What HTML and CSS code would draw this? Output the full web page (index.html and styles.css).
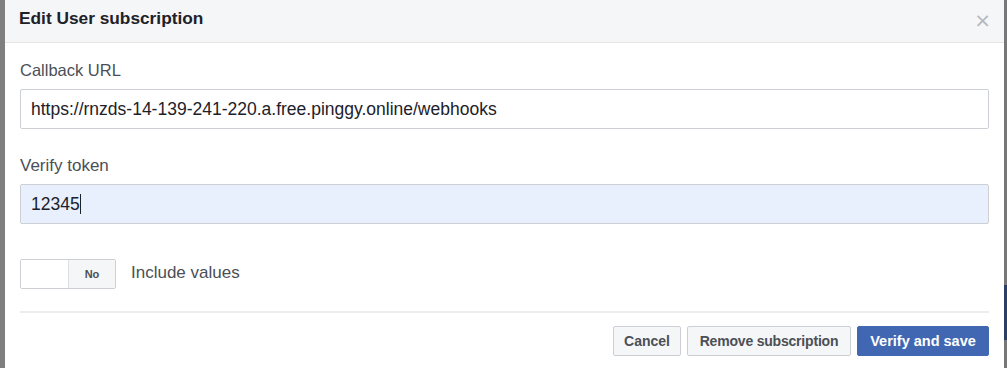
FILE: index.html
```html
<!DOCTYPE html>
<html lang="en">
<head>
<meta charset="utf-8"/>
<meta content="width=device-width, initial-scale=1.0" name="viewport"/>
<title>Edit User subscription</title>
<link rel="stylesheet" href="styles.css">
</head>
<body>
<div class="overlay">
<div class="dialog">
<header class="dialog-head">
<h1>Edit User subscription</h1>
<span class="close">&times;</span>
</header>
<main class="dialog-body">
<label class="field-label">Callback URL</label>
<div class="text-input">https://rnzds-14-139-241-220.a.free.pinggy.online/webhooks</div>
<label class="field-label second">Verify token</label>
<div class="text-input filled">12345<span class="caret"></span></div>
<div class="toggle-row">
<div class="toggle">
<span class="toggle-off"></span>
<span class="toggle-label">No</span>
</div>
<span class="toggle-text">Include values</span>
</div>
</main>
<footer class="dialog-foot">
<button class="btn btn-cancel">Cancel</button>
<button class="btn btn-remove">Remove subscription</button>
<button class="btn btn-save">Verify and save</button>
</footer>
</div>
<div class="side-edge"><span class="edge-blue"></span></div>
</div>
</body>
</html>
```

FILE: styles.css
```css
* {
  box-sizing: border-box;
}

body {
  margin: 0;
  padding: 0;
  font-family: 'Liberation Sans', Arial, sans-serif;
  background-color: #7f7f7f;
  color: #4b4f56;
}

.overlay {
  display: flex;
  height: 368px;
  padding-left: 5px;
}

.dialog {
  width: 999px;
  height: 368px;
  background-color: #fff;
  display: flex;
  flex-direction: column;
}

.dialog-head {
  height: 43px;
  background-color: #f5f6f7;
  border-bottom: 1px solid #e5e5e5;
  display: flex;
  align-items: center;
  justify-content: space-between;
  padding: 0 13px 5px 14px;
}

.dialog-head h1 {
  margin: 0;
  font-size: 17.3px;
  font-weight: 700;
  color: #1d2129;
}

.close {
  font-size: 20px;
  line-height: 20px;
  color: #b4b8bd;
  font-family: 'DejaVu Sans', sans-serif;
  margin-top: 2px;
}

.dialog-body {
  padding: 18px 15px 0 15px;
  display: flex;
  flex-direction: column;
}

.field-label {
  font-size: 16.5px;
  line-height: 18px;
  color: #4b4f56;
  margin-bottom: 10px;
}

.field-label.second {
  margin-top: 28px;
  margin-bottom: 9px;
  font-size: 17px;
}

.text-input {
  width: 969px;
  height: 40px;
  border: 1px solid #ccd0d5;
  border-radius: 2px;
  padding: 0 10px;
  font-size: 17.5px;
  line-height: 38px;
  color: #1d2129;
}

.text-input.filled {
  background-color: #e8f0fe;
}

.caret {
  display: inline-block;
  width: 1px;
  height: 20px;
  background-color: #1d2129;
  vertical-align: -4px;
}

.toggle-row {
  display: flex;
  align-items: center;
  margin-top: 35px;
}

.toggle {
  display: flex;
  width: 96px;
  height: 30px;
  border: 1px solid #ccd0d5;
  border-radius: 2px;
  overflow: hidden;
}

.toggle-off {
  width: 48px;
  background-color: #fff;
  border-right: 1px solid #dddfe2;
}

.toggle-label {
  flex: 1;
  background-color: #f5f6f7;
  font-size: 11px;
  font-weight: 700;
  color: #4b4f56;
  display: flex;
  align-items: center;
  justify-content: center;
}

.toggle-text {
  margin-left: 15px;
  font-size: 17px;
  color: #4b4f56;
  margin-top: -3px;
}

.dialog-foot {
  margin: 22px 15px 0 15px;
  border-top: 2px solid #ebedf0;
  padding-top: 13px;
  display: flex;
  justify-content: flex-end;
  gap: 6px;
}

.btn {
  height: 30px;
  padding: 0;
  font-family: 'Liberation Sans', Arial, sans-serif;
  font-size: 14px;
  font-weight: 700;
  color: #4b4f56;
  background-color: #f5f6f7;
  border: 1px solid #ccd0d5;
  border-radius: 2px;
  text-align: center;
}

.btn-cancel {
  width: 68px;
}

.btn-remove {
  width: 164px;
  letter-spacing: -0.2px;
}

.btn-save {
  width: 132px;
  font-size: 14.5px;
  background-color: #4267b2;
  border-color: #4267b2;
  color: #fff;
}

.side-edge {
  width: 3px;
  height: 368px;
  background-color: #777;
  position: relative;
}

.edge-blue {
  position: absolute;
  left: 0;
  top: 285px;
  width: 3px;
  height: 55px;
  background-color: #2b3f66;
}
```
